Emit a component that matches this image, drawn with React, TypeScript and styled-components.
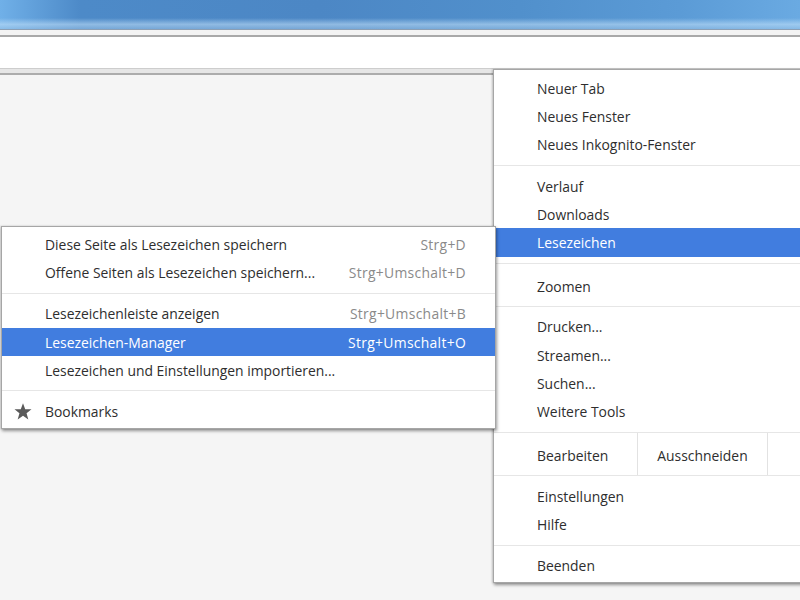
import * as React from 'react';
import styled, { createGlobalStyle } from 'styled-components';

const GlobalStyle = createGlobalStyle`
  html, body {
    margin: 0;
    padding: 0;
    overflow: hidden;
    background: #f5f5f5;
  }
`;

const ROW = 28.3;

const Window = styled.div`
  position: relative;
  width: 800px;
  height: 600px;
  overflow: hidden;
  display: flex;
  flex-direction: column;
  background: #f5f5f5;
  font-family: 'Open Sans', Lato, 'Liberation Sans', sans-serif;
  font-size: 13.9px;
  color: #2e2e2e;
`;

const TitleBar = styled.div`
  height: 29px;
  border-bottom: 1px solid #8c9fb4;
  background:
    linear-gradient(to bottom, rgba(255, 255, 255, 0) 0%, rgba(255, 255, 255, 0) 62%, rgba(200, 228, 250, 0.55) 84%, rgba(170, 205, 235, 0.45) 100%),
    linear-gradient(to right, #70b0e8 0%, #4d8ac8 10%, #4c87c5 40%, #5190cc 65%, #5b9bd6 85%, #6aaae2 100%);
`;

const TabStrip = styled.div`
  height: 5px;
  background: #f3f3f3;
  border-bottom: 2px solid #a9a9a9;
`;

const AddressBar = styled.div`
  height: 31px;
  background: #ffffff;
  border-bottom: 1px solid #cdcdcd;
`;

const BookmarkStrip = styled.div`
  height: 4px;
  background: #e6e6e6;
  border-bottom: 2px solid #acacac;
`;

const Content = styled.div`
  flex: 1;
  background: #f5f5f5;
`;

const Panel = styled.div<{ $left: number; $top: number; $width: number; $padTop: number }>`
  position: absolute;
  left: ${(p) => p.$left}px;
  top: ${(p) => p.$top}px;
  width: ${(p) => p.$width}px;
  box-sizing: border-box;
  background: #ffffff;
  border: 1px solid #a6a6a6;
  box-shadow: 1px 2px 3px rgba(0, 0, 0, 0.4), -1px 0 2px rgba(0, 0, 0, 0.15);

  & > div:first-child {
    padding-top: ${(p) => p.$padTop}px;
  }
  & > div:last-child {
    padding-bottom: 2px;
  }
`;

const Section = styled.div<{ $flat?: boolean }>`
  padding: ${(p) => (p.$flat ? '0' : '6px 0')};
  & + & {
    border-top: 1px solid #e6e6e6;
  }
`;

const Item = styled.div<{ $active?: boolean }>`
  height: ${ROW}px;
  display: flex;
  align-items: center;
  padding-right: 29px;
  white-space: nowrap;
  background: ${(p) => (p.$active ? '#417ddf' : 'transparent')};
  color: ${(p) => (p.$active ? '#ffffff' : 'inherit')};
`;

const Gutter = styled.span`
  width: 43px;
  flex: none;
  display: flex;
  align-items: center;
  padding-left: 12px;
  box-sizing: border-box;
`;

const Label = styled.span`
  flex: 1;
`;

const Shortcut = styled.span<{ $active?: boolean }>`
  letter-spacing: 0.3px;
  color: ${(p) => (p.$active ? '#ffffff' : '#8a8a8a')};
`;

/* taller rows that hold inline controls (zoom, edit) */
const WideRow = styled.div`
  height: 42px;
  display: flex;
  align-items: stretch;
  white-space: nowrap;
`;

const Cell = styled.div<{ $width: number; $center?: boolean }>`
  width: ${(p) => p.$width}px;
  flex: none;
  box-sizing: border-box;
  display: flex;
  align-items: center;
  justify-content: ${(p) => (p.$center ? 'center' : 'flex-start')};
  padding: 3px 0 0 ${(p) => (p.$center ? 0 : 43)}px;
  border-right: 1px solid #e2e2e2;
`;

const StarIcon = () => (
  <svg width="18" height="17" viewBox="0 0 24 23">
    <polygon
      points="12,0.5 15,8.3 23.5,8.6 16.8,13.9 19.2,22.3 12,17.4 4.8,22.3 7.2,13.9 0.5,8.6 9,8.3"
      fill="#5a5a5a"
    />
  </svg>
);

type Entry = { label: string; shortcut?: string; active?: boolean };

const MenuRow = ({ label, shortcut, active, icon }: Entry & { icon?: React.ReactNode }) => (
  <Item $active={active}>
    <Gutter>{icon}</Gutter>
    <Label>{label}</Label>
    {shortcut && <Shortcut $active={active}>{shortcut}</Shortcut>}
  </Item>
);

const mainGroups: Entry[][] = [
  [{ label: 'Neuer Tab' }, { label: 'Neues Fenster' }, { label: 'Neues Inkognito-Fenster' }],
  [{ label: 'Verlauf' }, { label: 'Downloads' }, { label: 'Lesezeichen', active: true }],
];

const toolGroup: Entry[] = [
  { label: 'Drucken...' },
  { label: 'Streamen...' },
  { label: 'Suchen...' },
  { label: 'Weitere Tools' },
];

const bookmarkGroups: Entry[][] = [
  [
    { label: 'Diese Seite als Lesezeichen speichern', shortcut: 'Strg+D' },
    { label: 'Offene Seiten als Lesezeichen speichern...', shortcut: 'Strg+Umschalt+D' },
  ],
  [
    { label: 'Lesezeichenleiste anzeigen', shortcut: 'Strg+Umschalt+B' },
    { label: 'Lesezeichen-Manager', shortcut: 'Strg+Umschalt+O', active: true },
    { label: 'Lesezeichen und Einstellungen importieren...' },
  ],
];

const App = () => {
  return (
    <Window>
      <GlobalStyle />
      <TitleBar />
      <TabStrip />
      <AddressBar />
      <BookmarkStrip />
      <Content />

      <Panel $left={493} $top={69} $width={420} $padTop={4}>
        {mainGroups.map((group, i) => (
          <Section key={i}>
            {group.map((e) => (
              <MenuRow key={e.label} {...e} />
            ))}
          </Section>
        ))}
        <Section $flat>
          <WideRow>
            <Cell $width={400}>Zoomen</Cell>
          </WideRow>
        </Section>
        <Section>
          {toolGroup.map((e) => (
            <MenuRow key={e.label} {...e} />
          ))}
        </Section>
        <Section $flat>
          <WideRow>
            <Cell $width={144}>Bearbeiten</Cell>
            <Cell $width={130} $center>
              Ausschneiden
            </Cell>
            <Cell $width={130} $center />
          </WideRow>
        </Section>
        <Section>
          <MenuRow label="Einstellungen" />
          <MenuRow label="Hilfe" />
        </Section>
        <Section>
          <MenuRow label="Beenden" />
        </Section>
      </Panel>

      <Panel $left={1} $top={226} $width={495} $padTop={3}>
        {bookmarkGroups.map((group, i) => (
          <Section key={i}>
            {group.map((e) => (
              <MenuRow key={e.label} {...e} />
            ))}
          </Section>
        ))}
        <Section>
          <MenuRow label="Bookmarks" icon={<StarIcon />} />
        </Section>
      </Panel>
    </Window>
  );
};

export default App;
